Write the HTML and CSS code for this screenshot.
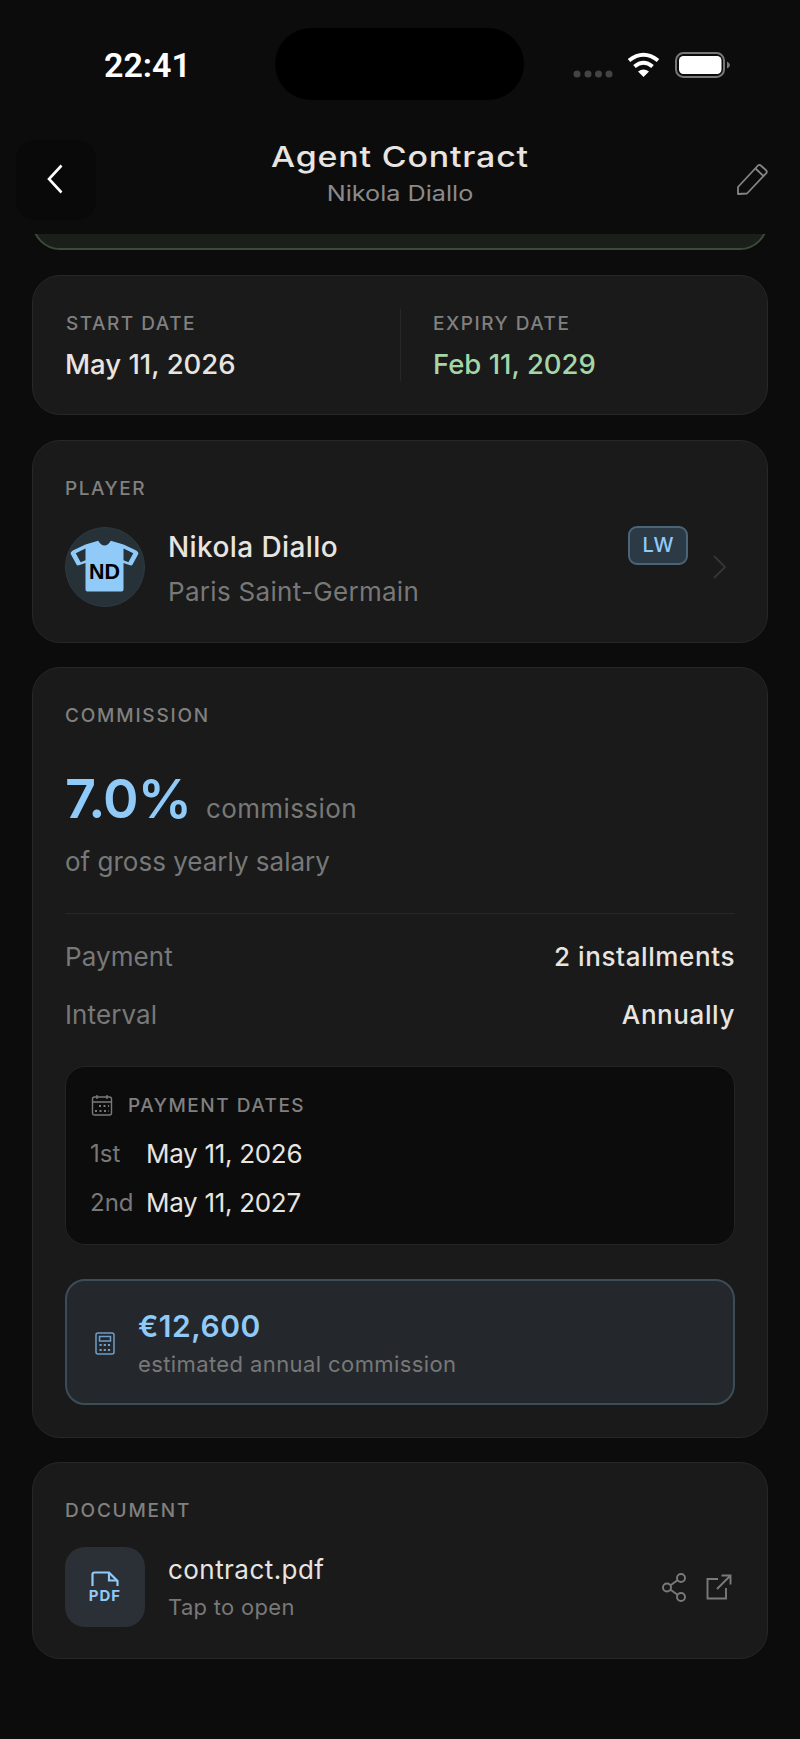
FILE: index.html
```html
<!DOCTYPE html>
<html lang="en">
<head>
<meta charset="utf-8">
<title>Agent Contract</title>
<link rel="stylesheet" href="styles.css">
</head>
<body>
<div class="screen">
  <div class="status">
    <span class="time">22:41</span>
    <div class="island"></div>
    <svg class="status-icons" width="157" height="26" viewBox="0 0 157 26">
      <g fill="#444"><circle cx="4" cy="22" r="3.5"/><circle cx="15" cy="22" r="3.5"/><circle cx="25.5" cy="22" r="3.5"/><circle cx="36" cy="22" r="3.5"/></g>
      <g fill="none" stroke="#fff" stroke-width="4"><path d="M56 8.5Q70.5-3 85 8.5"/><path d="M61.5 14.5Q70.5 7 79.5 14.5"/></g>
      <path fill="#fff" d="M65 19.5Q70.5 15.5 76 19.5L70.5 25Z"/>
      <rect x="103" y="1" width="48" height="24" rx="7.5" fill="none" stroke="#777" stroke-width="2"/>
      <rect x="106" y="4" width="42.5" height="18" rx="4.5" fill="#fff"/>
      <path fill="#777" d="M154 9.5Q157 11 157 13T154 16.5Z"/>
    </svg>
  </div>
  <header class="nav">
    <button class="back" type="button" aria-label="Back">
      <svg width="18" height="30" viewBox="0 0 18 30"><path d="M15.5 1.5 3 15l12.5 13.5" fill="none" stroke="#fff" stroke-width="2.6"/></svg>
    </button>
    <div class="nav-title">
      <h1 class="title">Agent Contract</h1>
      <p class="subtitle">Nikola Diallo</p>
    </div>
    <div class="nav-action">
      <svg width="32" height="32" viewBox="0 0 32 32" fill="none" stroke="#858585" stroke-width="1.8" stroke-linejoin="round"><path d="M2 24 22 2.5q1.500-1.300 2.800 0l5.500 5q1 1.300 0 2.600L11 30.500 2 31Z"/><path d="M19.500 5.500 27.500 13"/></svg>
    </div>
  </header>
  <main class="content">
    <div class="clip"><div class="sliver"></div></div>

    <section class="card dates">
      <div class="date-col">
        <div class="label">START DATE</div>
        <div class="date-value">May 11, 2026</div>
      </div>
      <div class="date-sep"></div>
      <div class="date-col date-col-right">
        <div class="label">EXPIRY DATE</div>
        <div class="date-value green">Feb 11, 2029</div>
      </div>
    </section>

    <section class="card player">
      <div class="label">PLAYER</div>
      <div class="player-row">
        <div class="avatar">
          <svg width="78" height="78" viewBox="0 0 80 80">
            <path fill="#90caf9" fill-rule="evenodd" d="M20 17 33 13Q39.500 23 46 13L59 17 72 23Q75 25 74 27L68 38Q67 39 65 38L59 36V63Q59 65 57 65H22Q20 65 20 63V36L14 38Q12 39 11 38L5 27Q4 25 7 23ZM20 21 10 26 15 35 20 33ZM59 21 69 26 64 35 59 33Z"/>
            <text class="jersey" x="39.500" y="52" text-anchor="middle">ND</text>
          </svg>
        </div>
        <div class="player-text">
          <div class="player-name">Nikola Diallo</div>
          <div class="player-club">Paris Saint-Germain</div>
        </div>
        <span class="badge">LW</span>
        <svg class="chevron" width="13" height="24" viewBox="0 0 13 24"><path d="M1 1 12 12 1 23" fill="none" stroke="#363636" stroke-width="1.8"/></svg>
      </div>
    </section>

    <section class="card">
      <div class="label label-wide">COMMISSION</div>
      <div class="rate-row">
        <span class="rate">7.0%</span>
        <span class="muted">commission</span>
      </div>
      <div class="muted rate-note">of gross yearly salary</div>
      <div class="divider"></div>
      <div class="kv"><span class="muted kv-key">Payment</span><span class="kv-value">2 installments</span></div>
      <div class="kv kv-next"><span class="muted kv-key">Interval</span><span class="kv-value">Annually</span></div>

      <div class="pay-dates">
        <div class="pay-head">
          <svg width="22" height="22" viewBox="0 0 22 22" fill="none" stroke="#7a7a7a" stroke-width="1.400"><rect x="1.500" y="3" width="19" height="18" rx="2"/><path d="M1.500 8H20.500M6 1V5M16 1V5"/><path stroke-width="2" stroke-dasharray="2 2.500" d="M8 12H18M4 17H18"/></svg>
          <span class="label">PAYMENT DATES</span>
        </div>
        <div class="pay-row"><span class="pay-ord">1st</span><span class="pay-date">May 11, 2026</span></div>
        <div class="pay-row pay-row-next"><span class="pay-ord">2nd</span><span class="pay-date">May 11, 2027</span></div>
      </div>

      <div class="estimate">
        <svg width="20" height="23" viewBox="0 0 20 23" fill="none" stroke="#6f9fc6" stroke-width="1.500"><rect x="1" y="1" width="18" height="21" rx="2"/><rect x="4.500" y="4.500" width="11" height="4.500"/><path stroke-width="2.200" stroke-dasharray="2.200 2" d="M4.500 13H16M4.500 18H16"/></svg>
        <div class="estimate-text">
          <div class="estimate-amount">€12,600</div>
          <div class="estimate-note">estimated annual commission</div>
        </div>
      </div>
    </section>

    <section class="card document">
      <div class="label label-wide">DOCUMENT</div>
      <div class="doc-row">
        <div class="doc-icon">
          <svg width="28" height="15" viewBox="0 0 28 15" fill="none" stroke="#90caf9" stroke-width="2.200"><path d="M1.500 15V3.500Q1.500 1.500 3.500 1.500H18L26.500 10V15"/><path d="M18 2V9.500H26"/></svg>
          <span class="doc-type">PDF</span>
        </div>
        <div class="doc-text">
          <div class="doc-name">contract.pdf</div>
          <div class="doc-hint">Tap to open</div>
        </div>
        <svg width="25" height="29" viewBox="0 0 25 29" fill="none" stroke="#7a7a7a" stroke-width="1.900"><circle cx="19" cy="5" r="4"/><circle cx="5" cy="14.500" r="4"/><circle cx="19" cy="24" r="4"/><path d="M8.500 12.300 15.500 7.300M8.500 16.700 15.500 21.700"/></svg>
        <svg class="doc-open" width="26" height="26" viewBox="0 0 26 26" fill="none" stroke="#7a7a7a" stroke-width="1.900"><path d="M12 5H1.500V24.500H20V14"/><path d="M11 15 24 2M15.500 1.500H24.500V10.500"/></svg>
      </div>
    </section>
  </main>
</div>
</body>
</html>
```

FILE: styles.css
```css
* { box-sizing: border-box; margin: 0; padding: 0; }
html, body { background: #0c0c0c; }
body { font-family: Inter, "Noto Sans", sans-serif; color: #e8e4e0; }
.screen { width: 800px; height: 1739px; overflow: hidden; background: #0c0c0c; }

.status { position: relative; display: flex; justify-content: space-between; align-items: flex-start; height: 140px; padding: 47px 70px 0 104px; }
.time { font: 600 34px/36px Roboto, sans-serif; color: #fff; }
.island { position: absolute; left: 275px; top: 28px; width: 249px; height: 72px; border-radius: 36px; background: #000; }
.status-icons { margin-top: 5px; }

.nav { display: flex; height: 94px; padding: 0 16px; }
.back { width: 80px; height: 80px; border: 0; border-radius: 18px; background: #090909; display: flex; align-items: center; justify-content: flex-start; padding: 0 0 2px 30px; }
.nav-title { flex: 1; text-align: center; }
.title { font: 500 29px/34px Inter, sans-serif; letter-spacing: 0.7px; color: #e8e4e0; transform: scaleX(1.17); }
.subtitle { margin-top: 6px; font: 400 21px/28px Inter, sans-serif; color: #8a8a8a; transform: scaleX(1.2); }
.nav-action { width: 80px; height: 80px; display: flex; justify-content: flex-end; padding: 23px 16px 0 0; }

.content { padding: 0 32px; display: flex; flex-direction: column; gap: 24px; }
.clip { height: 16px; overflow: hidden; margin-bottom: 1px; }
.sliver { height: 60px; margin-top: -44px; border: 2px solid #3b4a3b; border-radius: 28px; background: #1a1f1a; }

.card { background: #1a1a1a; border: 1px solid #272727; border-radius: 28px; padding: 36px 32px 32px; }
.label { margin: 1px 0 -1px; font-size: 19px; line-height: 22px; font-weight: 500; letter-spacing: 1.5px; color: #808080; }
.label-wide { letter-spacing: 1.8px; }
.muted { font-size: 26px; line-height: 34px; letter-spacing: 0.4px; color: #787878; }

.dates { display: flex; padding: 0; height: 140px; margin-bottom: 1px; }
.date-col { flex: 1; padding: 36px 0 0 33px; }
.date-col-right { padding-left: 32px; }
.date-value { margin: 13px 0 0 -1px; font-size: 27.5px; line-height: 34px; font-weight: 500; color: #e8e4e0; }
.date-col-right .date-value { margin-left: 0; }
.green { color: #a5d6a7; }
.date-sep { width: 1px; height: 72px; margin-top: 33px; background: #272727; }

.player { padding-bottom: 35px; }
.player-row { display: flex; align-items: flex-start; height: 80px; margin-top: 28px; }
.avatar { width: 80px; height: 80px; border-radius: 50%; border: 1px solid #2f3a40; background: #263238; margin-right: 23px; flex: none; }
.jersey { font: 700 22px "Liberation Sans", sans-serif; fill: #000; }
.player-text { flex: 1; padding-top: 3px; }
.player-name { font-size: 28px; line-height: 34px; font-weight: 500; letter-spacing: 0.4px; color: #e8e4e0; }
.player-club { margin-top: 11px; font-size: 26px; line-height: 34px; letter-spacing: 0.3px; color: #787878; }
.badge { width: 60px; height: 39px; margin-top: -1px; border: 2px solid #4a6478; border-radius: 9px; background: #2c3a46; font-size: 20px; line-height: 35px; font-weight: 500; text-align: center; color: #90caf9; }
.chevron { margin: 28px 9px 0 25px; }

.rate-row { display: flex; align-items: baseline; gap: 15px; margin-top: 43px; }
.rate { font-size: 54px; line-height: 60px; font-weight: 600; letter-spacing: -1px; color: #90caf9; }
.rate-note { margin-top: 16px; letter-spacing: 0; }
.divider { height: 1px; margin-top: 34px; background: #272727; }
.kv { display: flex; justify-content: space-between; margin-top: 26px; }
.kv-next { margin-top: 24px; }
.kv-key { letter-spacing: 0.1px; }
.kv-value { font-size: 26px; line-height: 34px; font-weight: 500; letter-spacing: 0.6px; color: #e8e4e0; }

.pay-dates { margin-top: 34px; padding: 27px 24px 24px; border: 1px solid #242424; border-radius: 20px; background: #0c0c0c; }
.pay-head { display: flex; align-items: center; gap: 15px; padding-left: 1px; }
.pay-row { display: flex; margin-top: 21px; font-size: 26px; line-height: 34px; }
.pay-row-next { margin-top: 15px; }
.pay-ord { width: 56px; font-size: 24px; color: #787878; }
.pay-date { letter-spacing: -0.3px; color: #e8e4e0; }

.estimate { display: flex; align-items: center; gap: 23px; height: 126px; margin-top: 34px; padding: 3px 0 0 28px; border: 2px solid #3c4c58; border-radius: 20px; background: #24282c; }
.estimate-amount { font-size: 30px; line-height: 36px; font-weight: 600; letter-spacing: 0.5px; color: #90caf9; }
.estimate-note { margin-top: 5px; font-size: 22px; line-height: 30px; letter-spacing: 0.4px; color: #787878; }

.document { padding-bottom: 31px; }
.doc-row { display: flex; align-items: center; margin-top: 26px; }
.doc-icon { width: 80px; height: 80px; flex: none; display: flex; flex-direction: column; align-items: center; padding-top: 24px; gap: 3px; border-radius: 20px; background: #2a3036; margin-right: 23px; }
.doc-type { font-size: 15px; line-height: 13px; font-weight: 700; letter-spacing: 1px; color: #90caf9; }
.doc-text { flex: 1; }
.doc-name { font-size: 26px; line-height: 34px; letter-spacing: 0.45px; color: #e8e4e0; }
.doc-hint { margin-top: 5px; font-size: 22px; line-height: 30px; letter-spacing: 0.3px; color: #787878; }
.doc-open { margin: 0 3px 0 19px; }
```
